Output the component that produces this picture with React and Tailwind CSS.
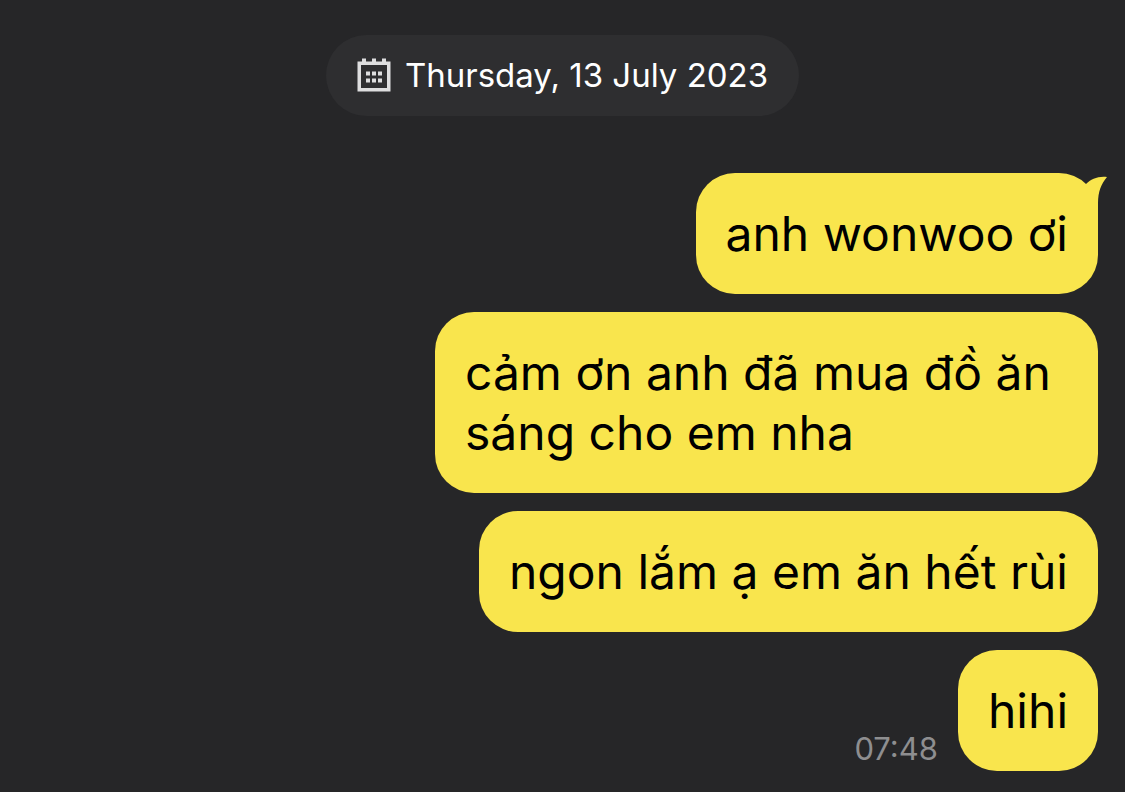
import React from 'react'
import clsx from 'clsx'

const messages = [
  { id: 1, text: 'anh wonwoo ơi', tail: true },
  { id: 2, text: 'cảm ơn anh đã mua đồ ăn sáng cho em nha' },
  { id: 3, text: 'ngon lắm ạ em ăn hết rùi' },
  { id: 4, text: 'hihi', time: '07:48' },
]

function CalendarIcon({ className }) {
  return (
    <svg viewBox="0 0 34 34" className={className} fill="currentColor" aria-hidden="true">
      <path fillRule="evenodd" d="M0.5 3.5h33v30H0.5z M4 7v23h26V7z" />
      <path d="M5 0.5h4v4H5z M15 0.5h4v4h-4z M25 0.5h4v4h-4z" />
      <path d="M9 13.5h4v4H9z M15 13.5h4v4h-4z M21 13.5h4v4h-4z" />
      <path d="M9 20.5h4v4H9z M15 20.5h4v4h-4z M21 20.5h4v4h-4z" />
    </svg>
  )
}

function Tail() {
  return (
    <svg
      viewBox="0 0 24 40"
      className="absolute top-[3px] -right-[10px] w-6 h-10 text-[#f9e54d]"
      fill="currentColor"
      aria-hidden="true"
    >
      <path d="M2 8 C7 3 14 0 23 1 C17 8 14 16 14 27 V40 H2 Z" />
    </svg>
  )
}

function Message({ text, time, tail }) {
  return (
    <li className="flex justify-end items-end gap-5">
      {time && (
        <time className="mb-1 text-[31px] leading-9 text-[#8e8e90]">{time}</time>
      )}
      <p
        className={clsx(
          'relative max-w-[663px] rounded-[39px] bg-[#f9e54d] px-[30px] pt-[31px] pb-[30px]',
          'text-[48px] leading-[60px] text-black'
        )}
      >
        {text}
        {tail && <Tail />}
      </p>
    </li>
  )
}

export default function App() {
  return (
    <main className="min-h-screen bg-[#262628] font-['Inter',sans-serif] pt-[35px] pb-5">
      {/* DATE */}
      <div className="flex justify-center">
        <button
          type="button"
          className="flex items-center gap-[14px] h-[81px] px-[31px] pb-[2px] rounded-full bg-[#2e2e30] text-[33px] leading-10 text-white"
        >
          <CalendarIcon className="w-[34px] h-[34px] text-[#dededf]" />
          Thursday, 13 July 2023
        </button>
      </div>

      {/* MESSAGES */}
      <ul className="flex flex-col gap-[18px] mt-[57px] pr-[27px] pl-6">
        {messages.map((m) => (
          <Message key={m.id} text={m.text} time={m.time} tail={m.tail} />
        ))}
      </ul>
    </main>
  )
}
